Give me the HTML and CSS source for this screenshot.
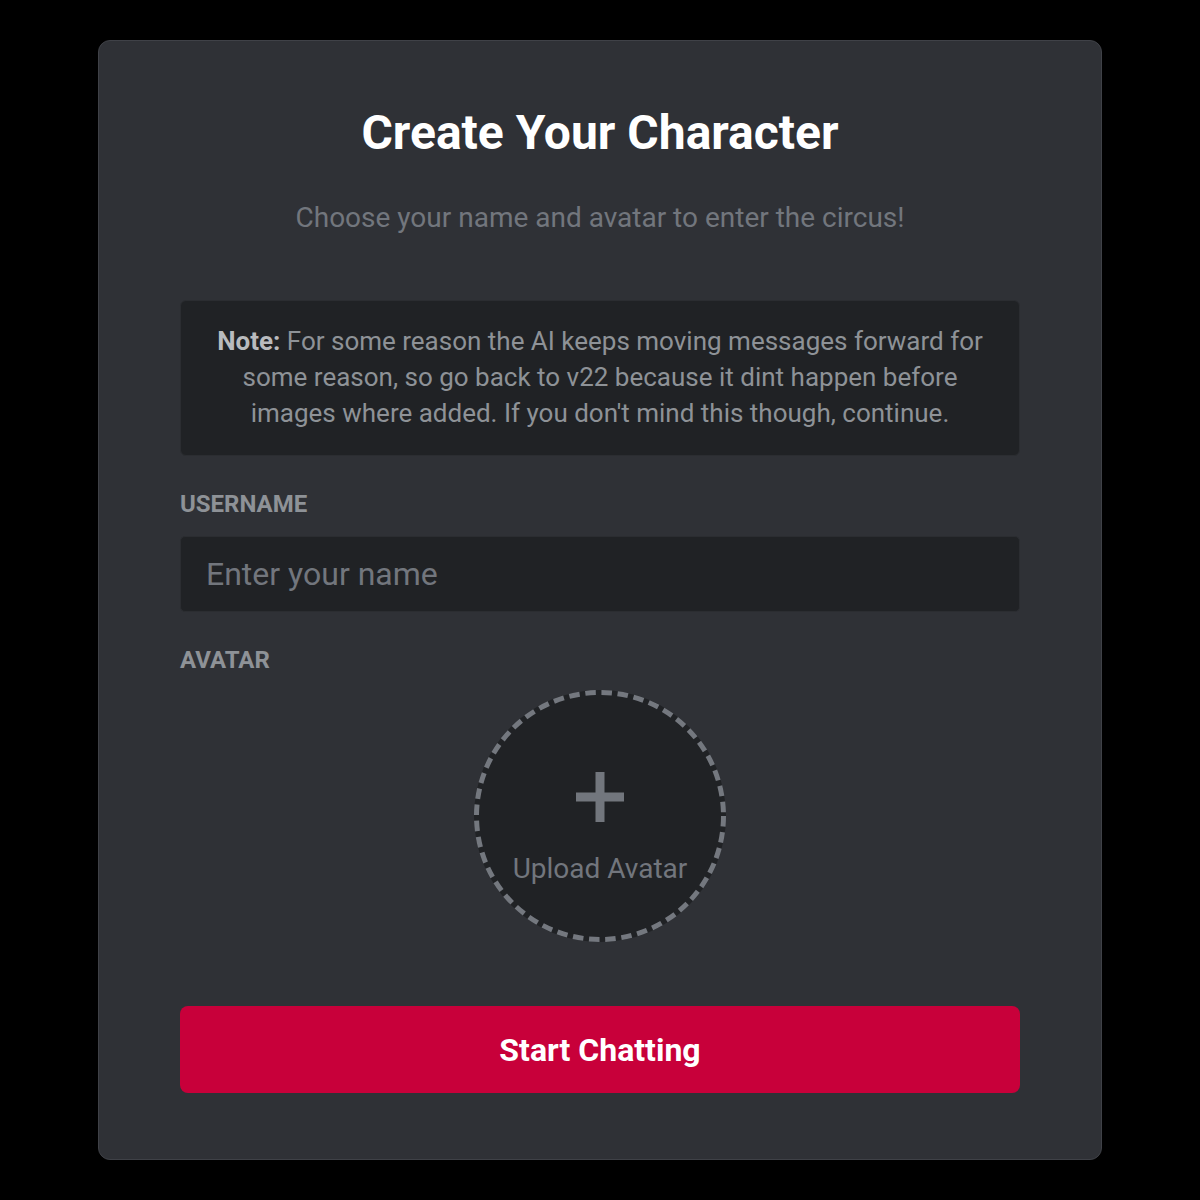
FILE: index.html
```html
<!DOCTYPE html>
<html lang="en">
<head>
<meta charset="utf-8">
<title>Create Your Character</title>
<link rel="stylesheet" href="styles.css">
</head>
<body>
<main class="page">
  <section class="card">
    <h1 class="title">Create Your Character</h1>
    <p class="subtitle">Choose your name and avatar to enter the circus!</p>
    <div class="note">
      <strong>Note:</strong> For some reason the AI keeps moving messages forward for some reason, so go back to v22 because it dint happen before images where added. If you don't mind this though, continue.
    </div>
    <label class="label label-user" for="username">USERNAME</label>
    <input class="input" id="username" type="text" placeholder="Enter your name">
    <div class="label label-avatar">AVATAR</div>
    <div class="avatar-wrap">
      <button class="avatar" type="button">
        <svg class="ring" width="252" height="252" viewBox="0 0 252 252" aria-hidden="true">
          <circle cx="126" cy="126" r="123.5" fill="none" stroke="#74787f" stroke-width="5" stroke-dasharray="10.5 5.7"/>
        </svg>
        <svg class="plus" width="48" height="50" viewBox="0 0 48 50" aria-hidden="true">
          <path d="M24 0v50M0 25h48" stroke="currentColor" stroke-width="9" fill="none"/>
        </svg>
        <span class="avatar-text">Upload Avatar</span>
      </button>
    </div>
    <button class="start" type="button">Start Chatting</button>
  </section>
</main>
</body>
</html>
```

FILE: styles.css
```css
html, body {
  margin: 0;
  padding: 0;
  background: #000000;
}

body {
  font-family: Roboto, "Noto Sans", "Liberation Sans", sans-serif;
  color: #dcddde;
}

.page {
  padding: 40px 98px;
  display: flex;
  justify-content: center;
}

.card {
  box-sizing: border-box;
  width: 1004px;
  background: #2f3136;
  border: 1px solid #3f4147;
  border-radius: 12px;
  padding: 64px 81px 66px;
  display: flex;
  flex-direction: column;
}

.title {
  margin: 0;
  text-align: center;
  font-size: 48px;
  line-height: 56px;
  font-weight: 700;
  color: #ffffff;
}

.subtitle {
  margin: 39px 0 0;
  text-align: center;
  font-size: 28px;
  line-height: 36px;
  color: #72767d;
}

.note {
  margin-top: 64px;
  background: #202225;
  border: 1px solid #2b2d31;
  border-radius: 6px;
  padding: 22px 25px 24px;
  text-align: center;
  font-size: 26px;
  line-height: 36px;
  color: #8e9297;
}

.note strong {
  color: #b9bbbe;
  font-weight: 700;
}

.label {
  display: block;
  font-size: 24px;
  line-height: 28px;
  font-weight: 700;
  color: #8e9297;
}

.label-user {
  margin-top: 34px;
}

.label-avatar {
  margin-top: 34px;
}

.input {
  box-sizing: border-box;
  margin-top: 18px;
  width: 100%;
  height: 76px;
  border: 1px solid #2b2d31;
  border-radius: 5px;
  background: #202225;
  padding: 0 25px;
  font-family: inherit;
  font-size: 32px;
  color: #dcddde;
  outline: none;
}

.input::placeholder {
  color: #72767d;
}

.avatar-wrap {
  display: flex;
  justify-content: center;
  margin-top: 16px;
}

.avatar {
  position: relative;
  box-sizing: border-box;
  width: 252px;
  height: 252px;
  border-radius: 50%;
  border: none;
  background: #202225;
  display: flex;
  flex-direction: column;
  align-items: center;
  justify-content: center;
  padding: 25px 0 0;
  font-family: inherit;
  cursor: pointer;
}

.ring {
  position: absolute;
  left: 0;
  top: 0;
}

.plus {
  color: #72767d;
}

.avatar-text {
  margin-top: 31px;
  font-size: 28px;
  line-height: 32px;
  color: #72767d;
}

.start {
  margin-top: 64px;
  height: 87px;
  width: 100%;
  border: none;
  border-radius: 8px;
  background: #c8003a;
  color: #ffffff;
  font-family: inherit;
  font-size: 32px;
  font-weight: 700;
  cursor: pointer;
}
```
